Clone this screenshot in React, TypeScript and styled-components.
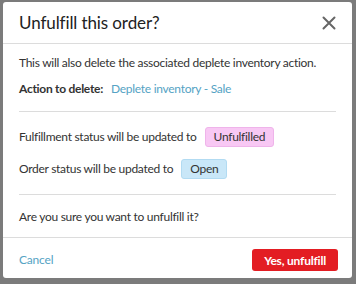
import React from "react";
import styled, { createGlobalStyle } from "styled-components";

const Global = createGlobalStyle`
  html, body { margin: 0; padding: 0; background: #7b7b7b; }
  body { font-family: "Lato", "Open Sans", sans-serif; color: #333; }
`;

const Overlay = styled.div`
  width: 356px;
  height: 284px;
  padding: 2px 4px 0 3px;
  box-sizing: border-box;
  background: #7b7b7b;
  overflow: hidden;
`;

const Modal = styled.div`
  background: #fff;
  border-radius: 3px;
  height: 276px;
  display: flex;
  flex-direction: column;
`;

const Header = styled.div`
  height: 41px;
  flex: none;
  border-bottom: 1px solid #dcdcdc;
  display: flex;
  align-items: center;
  justify-content: space-between;
  padding: 0 14px 0 16px;
`;

const Title = styled.h1`
  margin: 0;
  font-size: 17px;
  font-weight: 400;
  letter-spacing: -0.1px;
  color: #222;
`;

const Close = styled.button`
  border: 0;
  background: none;
  padding: 0;
  width: 18px;
  height: 18px;
  display: flex;
  align-items: center;
  justify-content: center;
`;

const Body = styled.div`
  padding: 9px 16px 10px;
  border-bottom: 1px solid #dcdcdc;
`;

const Line = styled.div<{ $mt?: number }>`
  font-size: 12px;
  letter-spacing: -0.28px;
  line-height: 20px;
  margin-top: ${(p) => p.$mt ?? 0}px;
  display: flex;
  align-items: center;
  white-space: nowrap;
`;

const Label = styled.span`
  font-weight: 700;
  margin-right: 8px;
`;

const Link = styled.a`
  color: #55a3c4;
  text-decoration: none;
`;

const Divider = styled.hr<{ $mt: number }>`
  border: 0;
  border-top: 1px solid #dcdcdc;
  margin: ${(p) => p.$mt}px 0 0;
`;

const Pill = styled.span<{ $bg: string; $bd: string }>`
  display: inline-flex;
  align-items: center;
  height: 20px;
  box-sizing: border-box;
  padding: 0 8px;
  margin-left: 8px;
  background: ${(p) => p.$bg};
  border: 1px solid ${(p) => p.$bd};
  border-radius: 3px;
  color: #333;
`;

const Footer = styled.div`
  flex: 1;
  display: flex;
  align-items: flex-start;
  justify-content: space-between;
  padding: 11px 14px 0 16px;
`;

const Cancel = styled.a`
  font-size: 12px;
  letter-spacing: -0.2px;
  line-height: 22px;
  color: #55a3c4;
`;

const Danger = styled.button`
  height: 22px;
  padding: 0 12px;
  border: 0;
  border-radius: 3px;
  background: #e31d23;
  color: #fff;
  font-family: inherit;
  font-weight: 700;
  font-size: 12px;
  letter-spacing: -0.2px;
`;

export default function App() {
  return (
    <>
      <Global />
      <Overlay>
        <Modal>
          <Header>
            <Title>Unfulfill this order?</Title>
            <Close aria-label="Close">
              <svg width="14" height="14" viewBox="0 0 14 14">
                <path d="M1.5 1.5 L12.5 12.5 M12.5 1.5 L1.5 12.5" stroke="#666" strokeWidth="2" strokeLinecap="round" />
              </svg>
            </Close>
          </Header>
          <Body>
            <Line>This will also delete the associated deplete inventory action.</Line>
            <Line $mt={6}>
              <Label>Action to delete:</Label>
              <Link>Deplete inventory - Sale</Link>
            </Line>
            <Divider $mt={12} />
            <Line $mt={15}>
              Fulfillment status will be updated to
              <Pill $bg="#f8c8f4" $bd="#efb4ea">Unfulfilled</Pill>
            </Line>
            <Line $mt={12}>
              Order status will be updated to
              <Pill $bg="#c9e7f8" $bd="#b2dbf2">Open</Pill>
            </Line>
            <Divider $mt={15} />
            <Line $mt={12}>Are you sure you want to unfulfill it?</Line>
          </Body>
          <Footer>
            <Cancel>Cancel</Cancel>
            <Danger>Yes, unfulfill</Danger>
          </Footer>
        </Modal>
      </Overlay>
    </>
  );
}
